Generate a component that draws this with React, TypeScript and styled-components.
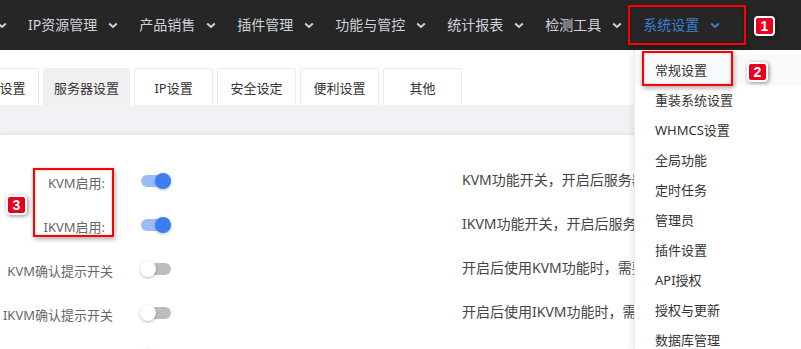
import React from "react";
import styled, { createGlobalStyle } from "styled-components";

const GlobalStyle = createGlobalStyle`
  html, body {
    margin: 0;
    padding: 0;
  }
  body {
    background: #f0f2f5;
    font-family: "Noto Sans", "Noto Sans CJK SC", sans-serif;
  }
`;

const Page = styled.div`
  position: relative;
  width: 801px;
  height: 349px;
  overflow: hidden;
  background: #f0f2f5;
`;

// 顶部导航
const NavBar = styled.nav`
  height: 50px;
  background: #262626;
  display: flex;
  align-items: center;
  overflow: hidden;
`;

const NavList = styled.ul`
  display: flex;
  align-items: center;
  list-style: none;
  margin: 0 0 0 -81px;
  padding: 0;
  height: 100%;
`;

const NavItem = styled.li<{ $active?: boolean }>`
  display: flex;
  align-items: center;
  gap: 11px;
  height: 100%;
  padding: 0 10px 0 11px;
  font-size: 14px;
  line-height: 1;
  white-space: nowrap;
  color: ${(p) => (p.$active ? "#3a80d2" : "#cfd3da")};
`;

const Chevron = () => (
  <svg width="10" height="7" viewBox="0 0 10 7" style={{ marginTop: 1 }}>
    <polyline
      points="1.2,1.5 5,5 8.8,1.5"
      fill="none"
      stroke="currentColor"
      strokeWidth="2"
    />
  </svg>
);

// 标签页
const TabsBar = styled.div`
  height: 55px;
  background: #fff;
  display: flex;
  align-items: flex-end;
  overflow: hidden;
`;

const TabList = styled.div`
  display: flex;
  gap: 4px;
  margin-left: -40px;
  height: 37px;
`;

const Tab = styled.div<{ $active?: boolean }>`
  box-sizing: border-box;
  min-width: 79px;
  height: 37px;
  padding: 0 10px;
  display: flex;
  align-items: center;
  justify-content: center;
  border: 1px solid ${(p) => (p.$active ? "#f0f0f0" : "#ebebeb")};
  border-bottom: none;
  border-radius: 3px 3px 0 0;
  background: ${(p) => (p.$active ? "#f0f0f0" : "#fff")};
  font-size: 13px;
  color: #333;
  white-space: nowrap;
`;

// 内容
const Card = styled.section`
  margin-top: 30px;
  padding-top: 24px;
  background: #fff;
  box-shadow: 0 -1px 4px rgba(0, 0, 0, 0.07);
  height: 400px;
`;

const Row = styled.div`
  display: flex;
  align-items: center;
  height: 44px;
`;

const Label = styled.div<{ $colon?: boolean }>`
  box-sizing: border-box;
  width: 113px;
  flex-shrink: 0;
  text-align: right;
  padding-right: ${(p) => (p.$colon ? "8px" : "0")};
  padding-top: 2px;
  font-size: 13px;
  color: #666;
  white-space: nowrap;
`;

const SwitchCell = styled.div`
  box-sizing: border-box;
  width: 349px;
  flex-shrink: 0;
  padding-left: 28px;
`;

const Switch = styled.span<{ $on?: boolean }>`
  position: relative;
  display: block;
  width: 30px;
  height: 12px;
  border-radius: 6px;
  background: ${(p) => (p.$on ? "#9dbcf6" : "#bdbdbd")};

  &::after {
    content: "";
    position: absolute;
    top: -2px;
    left: ${(p) => (p.$on ? "14px" : "-1px")};
    width: 16px;
    height: 16px;
    border-radius: 50%;
    background: ${(p) => (p.$on ? "#3b7ef2" : "#fff")};
    box-shadow: 0 1px 3px rgba(0, 0, 0, 0.28);
  }
`;

// 说明文字被右侧下拉菜单遮住，这里直接裁切到菜单左边缘
const Desc = styled.div`
  width: 172px;
  overflow: hidden;
  padding-bottom: 5px;
  font-size: 14px;
  color: #444;
  white-space: nowrap;
`;

// 下拉菜单
const Menu = styled.ul`
  position: absolute;
  top: 50px;
  left: 634px;
  width: 167px;
  height: 299px;
  overflow: hidden;
  margin: 0;
  padding: 5px 0 0;
  box-sizing: border-box;
  list-style: none;
  background: #fff;
  border-left: 1px solid #ececec;
  box-shadow: -2px 2px 8px rgba(0, 0, 0, 0.08);
`;

const MenuItem = styled.li<{ $hover?: boolean }>`
  height: 30px;
  line-height: 30px;
  padding-left: 20px;
  font-size: 13px;
  color: #333;
  white-space: nowrap;
  background: ${(p) => (p.$hover ? "#f8f9fa" : "transparent")};
`;

// 标注
const Mark = styled.div<{ $x: number; $y: number; $w: number; $h: number }>`
  position: absolute;
  left: ${(p) => p.$x}px;
  top: ${(p) => p.$y}px;
  width: ${(p) => p.$w}px;
  height: ${(p) => p.$h}px;
  box-sizing: border-box;
  border: 2px solid #f00;
  box-shadow: 1px 2px 5px rgba(0, 0, 0, 0.35), inset 0 0 3px rgba(0, 0, 0, 0.2);
  pointer-events: none;
`;

const Badge = styled.div<{ $x: number; $y: number }>`
  position: absolute;
  left: ${(p) => p.$x}px;
  top: ${(p) => p.$y}px;
  width: 21px;
  height: 20px;
  box-sizing: border-box;
  border: 2px solid #fff;
  border-radius: 4px;
  background: #e8001c;
  box-shadow: 1px 1px 4px rgba(0, 0, 0, 0.45);
  color: #fff;
  font-family: "Liberation Sans", Arial, sans-serif;
  font-weight: bold;
  font-size: 14px;
  line-height: 16px;
  text-align: center;
`;

const navItems = [
  "用户管理",
  "IP资源管理",
  "产品销售",
  "插件管理",
  "功能与管控",
  "统计报表",
  "检测工具",
  "系统设置",
];

const tabs = ["常规设置", "服务器设置", "IP设置", "安全设定", "便利设置", "其他"];

const rows = [
  { label: "KVM启用:", colon: true, on: true, desc: "KVM功能开关，开启后服务器详情页显示KVM按钮" },
  { label: "IKVM启用:", colon: true, on: true, desc: "IKVM功能开关，开启后服务器详情页显示IKVM按钮" },
  { label: "KVM确认提示开关", on: false, desc: "开启后使用KVM功能时，需要进行二次确认" },
  { label: "IKVM确认提示开关", on: false, desc: "开启后使用IKVM功能时，需要进行二次确认" },
  { label: "VNC启用", on: false, desc: "VNC功能开关，开启后服务器详情页显示" },
];

const menuItems = [
  "常规设置",
  "重装系统设置",
  "WHMCS设置",
  "全局功能",
  "定时任务",
  "管理员",
  "插件设置",
  "API授权",
  "授权与更新",
  "数据库管理",
];

export default function App() {
  return (
    <>
      <GlobalStyle />
      <Page>
        <NavBar>
          <NavList>
            {navItems.map((n) => (
              <NavItem key={n} $active={n === "系统设置"}>
                {n}
                <Chevron />
              </NavItem>
            ))}
          </NavList>
        </NavBar>

        <TabsBar>
          <TabList>
            {tabs.map((t) => (
              <Tab key={t} $active={t === "服务器设置"}>
                {t}
              </Tab>
            ))}
          </TabList>
        </TabsBar>

        <Card>
          {rows.map((r) => (
            <Row key={r.label}>
              <Label $colon={r.colon}>{r.label}</Label>
              <SwitchCell>
                <Switch $on={r.on} />
              </SwitchCell>
              <Desc>{r.desc}</Desc>
            </Row>
          ))}
        </Card>

        <Menu>
          {menuItems.map((m, i) => (
            <MenuItem key={m} $hover={i === 0}>
              {m}
            </MenuItem>
          ))}
        </Menu>

        <Mark $x={628} $y={5} $w={118} $h={40} />
        <Badge $x={754} $y={16}>1</Badge>
        <Mark $x={642} $y={51} $w={91} $h={35} />
        <Badge $x={747} $y={62}>2</Badge>
        <Mark $x={33} $y={168} $w={81} $h={69} />
        <Badge $x={6} $y={195}>3</Badge>
      </Page>
    </>
  );
}
